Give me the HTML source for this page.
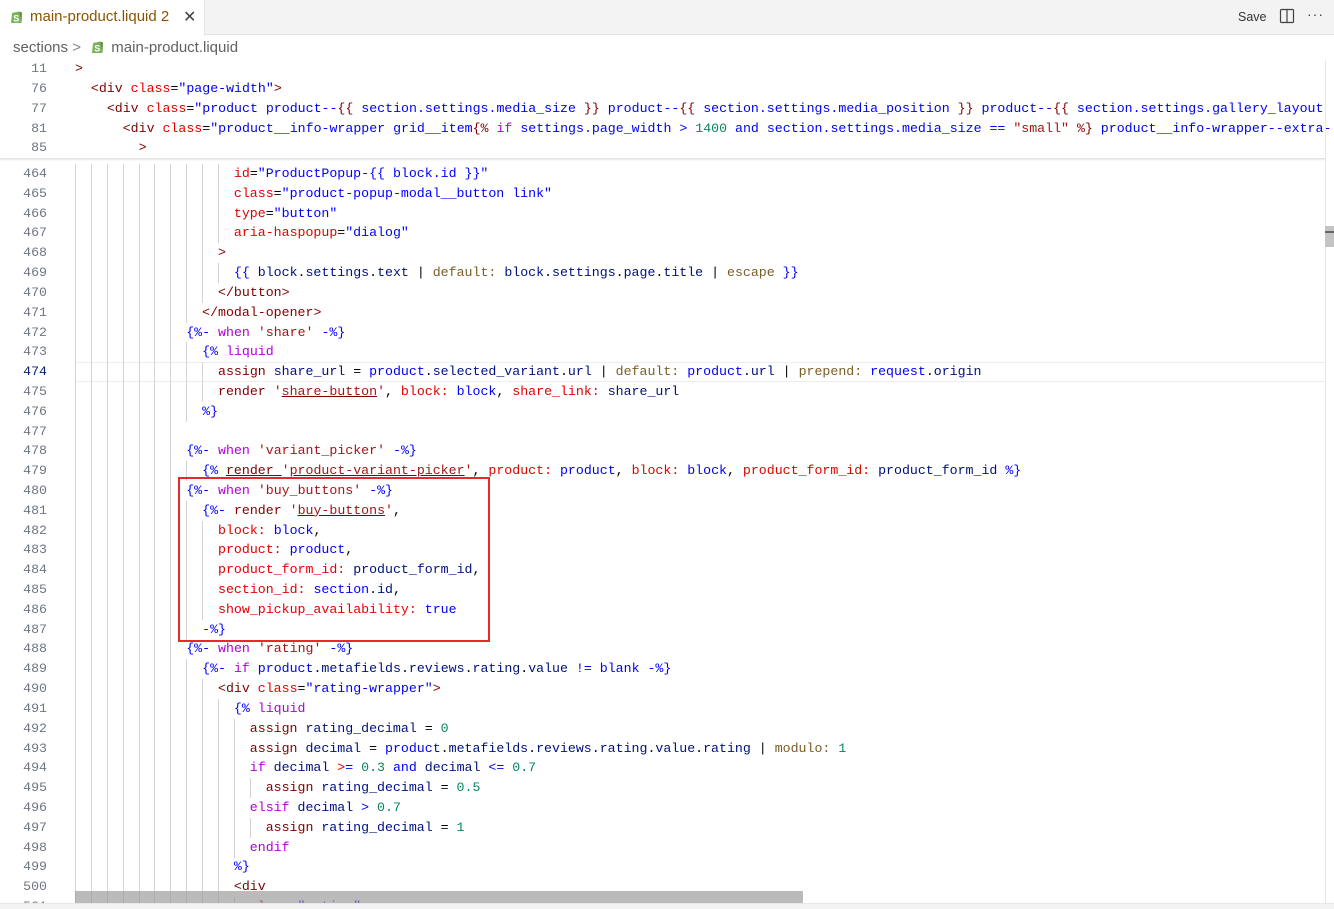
<!DOCTYPE html>
<html><head><meta charset="utf-8"><style>
*{margin:0;padding:0;box-sizing:border-box}
html,body{width:1334px;height:909px;overflow:hidden}
body{background:#fff;position:relative;font-family:"Liberation Sans",sans-serif}
.tabbar{position:absolute;left:0;top:0;width:1334px;height:35px;background:#f3f3f3;border-bottom:1px solid #e5e5e5}
.tab{position:absolute;left:0;top:0;width:205px;height:36px;background:#fff;border-right:1px solid #e5e5e5}
.tab .t{position:absolute;left:30px;top:8px;font-size:15px;color:#895503}
.tab .x{position:absolute;left:183px;top:7px;font-size:16px;color:#424242}
.save{position:absolute;left:1238px;top:10px;font-size:12.5px;color:#333}
.bc{position:absolute;left:13px;top:39px;font-size:15px;color:#616161}
.code{font-family:"Liberation Mono",monospace;font-size:13.25px;white-space:pre}
.ln{position:absolute;left:0;width:47px;text-align:right;color:#6e7681;font-family:"Liberation Mono",monospace;font-size:13.25px;line-height:20px}
.l{position:absolute;left:75px;line-height:20px;height:20px}
.g{display:inline-block;width:2ch;height:20px;vertical-align:top;box-shadow:inset 1px 0 #d3d3d3}
.tg{color:#800000}.at{color:#e50000}.s{color:#0000ff}.st{color:#a31515}.d{color:#0000ff}.k{color:#af00db}.v{color:#001080}.f{color:#795e26}.n{color:#098658}.u{text-decoration:underline;text-decoration-color:#800000}
#clip{position:absolute;left:0;top:0;width:1334px;height:903px;overflow:hidden}
</style></head><body>
<div class="tabbar"></div>
<div class="tab">
<svg style="position:absolute;left:10px;top:9px" width="13" height="15" viewBox="0 0 13 15"><path d="M2 4 L9 2.5 L11.5 14 L1 14 Z" fill="#7ab55c"/><path d="M9 2.5 L12 3.5 L11.5 14 Z" fill="#5e8e3e"/><text x="3.2" y="12.5" font-size="9" font-weight="bold" fill="#fff" font-family="Liberation Sans">S</text></svg>
<span class="t">main-product.liquid&nbsp;2</span><span class="x">✕</span></div>
<div class="save">Save</div>
<svg style="position:absolute;left:1279px;top:8px" width="16" height="16" viewBox="0 0 16 16"><rect x="1.5" y="1.5" width="13" height="13" rx="1" fill="none" stroke="#424242" stroke-width="1.2"/><line x1="8" y1="1.5" x2="8" y2="14.5" stroke="#424242" stroke-width="1.2"/></svg>
<div style="position:absolute;left:1307px;top:6px;font-size:14px;color:#424242;letter-spacing:1px">···</div>
<div class="bc">sections <span style="color:#888">&gt;</span> <svg style="vertical-align:-2px;margin:0 3px 0 6px" width="13" height="15" viewBox="0 0 13 15"><path d="M2 4 L9 2.5 L11.5 14 L1 14 Z" fill="#7ab55c"/><path d="M9 2.5 L12 3.5 L11.5 14 Z" fill="#5e8e3e"/><text x="3.2" y="12.5" font-size="9" font-weight="bold" fill="#fff" font-family="Liberation Sans">S</text></svg> main-product.liquid</div>

<div id="clip">
<div class="ln" style="top:59px">11</div><div class="l code" style="top:59px"><span class="tg">&gt;</span></div>
<div class="ln" style="top:79px">76</div><div class="l code" style="top:79px">  <span class="tg">&lt;div</span> <span class="at">class</span>=<span class="s">"page-width"</span><span class="tg">&gt;</span></div>
<div class="ln" style="top:99px">77</div><div class="l code" style="top:99px">    <span class="tg">&lt;div</span> <span class="at">class</span>=<span class="s">"product product--</span><span class="tg">{{</span><span class="s"> section.settings.media_size </span><span class="tg">}}</span><span class="s"> product--</span><span class="tg">{{</span><span class="s"> section.settings.media_position </span><span class="tg">}}</span><span class="s"> product--</span><span class="tg">{{</span><span class="s"> section.settings.gallery_layout</span></div>
<div class="ln" style="top:119px">81</div><div class="l code" style="top:119px">      <span class="tg">&lt;div</span> <span class="at">class</span>=<span class="s">"product__info-wrapper grid__item</span><span class="tg">{%</span> <span class="k">if</span> <span class="s">settings.page_width &gt; </span><span class="n">1400</span><span class="s"> and section.settings.media_size == </span><span class="st">"small"</span> <span class="tg">%}</span><span class="s"> product__info-wrapper--extra-</span></div>
<div class="ln" style="top:138px">85</div><div class="l code" style="top:138px">        <span class="tg">&gt;</span></div>
<div style="position:absolute;left:0;top:158px;width:1325px;height:3px;background:linear-gradient(#ddd,rgba(255,255,255,0))"></div>

<div style="position:absolute;left:75px;top:362px;width:1250px;height:20px;border-top:1px solid #eee;border-bottom:1px solid #eee"></div>

<div id="c"></div>
</div>
<script>
const G=n=>'<span class="g"></span>'.repeat(n/2);
const L=[
[464,20,'<span class="at">id</span>=<span class="s">"ProductPopup-{{ block.id }}"</span>'],
[465,20,'<span class="at">class</span>=<span class="s">"product-popup-modal__button link"</span>'],
[466,20,'<span class="at">type</span>=<span class="s">"button"</span>'],
[467,20,'<span class="at">aria-haspopup</span>=<span class="s">"dialog"</span>'],
[468,18,'<span class="tg">&gt;</span>'],
[469,20,'<span class="d">{{</span> <span class="v">block</span>.<span class="v">settings</span>.<span class="v">text</span> | <span class="f">default:</span> <span class="v">block</span>.<span class="v">settings</span>.<span class="v">page</span>.<span class="v">title</span> | <span class="f">escape</span> <span class="d">}}</span>'],
[470,18,'<span class="tg">&lt;/button&gt;</span>'],
[471,16,'<span class="tg">&lt;/modal-opener&gt;</span>'],
[472,14,'<span class="d">{%-</span> <span class="k">when</span> <span class="st">\'share\'</span> <span class="d">-%}</span>'],
[473,16,'<span class="d">{%</span> <span class="k">liquid</span>'],
[474,18,'<span class="tg">assign</span> <span class="v">share_url</span> = <span class="s">product</span>.<span class="v">selected_variant</span>.<span class="v">url</span> | <span class="f">default:</span> <span class="s">product</span>.<span class="v">url</span> | <span class="f">prepend:</span> <span class="s">request</span>.<span class="v">origin</span>'],
[475,18,'<span class="tg">render</span> <span class="st">\'<span class="u">share-button</span>\'</span>, <span class="at">block:</span> <span class="s">block</span>, <span class="at">share_link:</span> <span class="v">share_url</span>'],
[476,16,'<span class="d">%}</span>'],
[477,14,''],
[478,14,'<span class="d">{%-</span> <span class="k">when</span> <span class="st">\'variant_picker\'</span> <span class="d">-%}</span>'],
[479,16,'<span class="d">{%</span> <span class="tg u">render</span><span class="u"> </span><span class="st">\'<span class="u">product-variant-picker</span>\'</span>, <span class="at">product:</span> <span class="s">product</span>, <span class="at">block:</span> <span class="s">block</span>, <span class="at">product_form_id:</span> <span class="v">product_form_id</span> <span class="d">%}</span>'],
[480,14,'<span class="d">{%-</span> <span class="k">when</span> <span class="st">\'buy_buttons\'</span> <span class="d">-%}</span>'],
[481,16,'<span class="d">{%-</span> <span class="tg">render</span> <span class="st">\'<span class="u">buy-buttons</span>\'</span>,'],
[482,18,'<span class="at">block:</span> <span class="s">block</span>,'],
[483,18,'<span class="at">product:</span> <span class="s">product</span>,'],
[484,18,'<span class="at">product_form_id:</span> <span class="v">product_form_id</span>,'],
[485,18,'<span class="at">section_id:</span> <span class="s">section</span>.<span class="v">id</span>,'],
[486,18,'<span class="at">show_pickup_availability:</span> <span class="s">true</span>'],
[487,16,'<span class="d">-%}</span>'],
[488,14,'<span class="d">{%-</span> <span class="k">when</span> <span class="st">\'rating\'</span> <span class="d">-%}</span>'],
[489,16,'<span class="d">{%-</span> <span class="k">if</span> <span class="s">product</span>.<span class="v">metafields</span>.<span class="v">reviews</span>.<span class="v">rating</span>.<span class="v">value</span> <span class="s">!=</span> <span class="s">blank</span> <span class="d">-%}</span>'],
[490,18,'<span class="tg">&lt;div</span> <span class="at">class</span>=<span class="s">"rating-wrapper"</span><span class="tg">&gt;</span>'],
[491,20,'<span class="d">{%</span> <span class="k">liquid</span>'],
[492,22,'<span class="tg">assign</span> <span class="v">rating_decimal</span> = <span class="n">0</span>'],
[493,22,'<span class="tg">assign</span> <span class="v">decimal</span> = <span class="s">product</span>.<span class="v">metafields</span>.<span class="v">reviews</span>.<span class="v">rating</span>.<span class="v">value</span>.<span class="v">rating</span> | <span class="f">modulo:</span> <span class="n">1</span>'],
[494,22,'<span class="k">if</span> <span class="v">decimal</span> <span class="at">&gt;</span><span class="s">=</span> <span class="n">0.3</span> <span class="s">and</span> <span class="v">decimal</span> <span class="s">&lt;=</span> <span class="n">0.7</span>'],
[495,24,'<span class="tg">assign</span> <span class="v">rating_decimal</span> = <span class="n">0.5</span>'],
[496,22,'<span class="k">elsif</span> <span class="v">decimal</span> <span class="s">&gt;</span> <span class="n">0.7</span>'],
[497,24,'<span class="tg">assign</span> <span class="v">rating_decimal</span> = <span class="n">1</span>'],
[498,22,'<span class="k">endif</span>'],
[499,20,'<span class="d">%}</span>'],
[500,20,'<span class="tg">&lt;div</span>'],
[501,22,'<span class="at">class</span>=<span class="s">"rating"</span>']
];
let h='';
L.forEach((r,i)=>{const t=(164+i*19.81).toFixed(1);
h+=`<div class="ln" style="top:${t}px;${r[0]==474?'color:#0b216f':''}">${r[0]}</div><div class="l code" style="top:${t}px">${G(r[1])}${r[2]}</div>`;});
document.getElementById('c').innerHTML=h;
</script>

<div style="position:absolute;left:178px;top:477px;width:312px;height:165px;border:2px solid #e8282b"></div>

<div style="position:absolute;left:75px;top:891px;width:728px;height:12px;background:rgba(150,150,150,.65)"></div>
<div style="position:absolute;left:0;top:903px;width:1334px;height:6px;background:#f3f3f3;border-top:1px solid #e8e8e8"></div>
<div style="position:absolute;left:1325px;top:60px;width:1px;height:843px;background:#e8e8e8"></div>
<div style="position:absolute;left:1325px;top:226px;width:9px;height:21px;background:#c4c4c4"></div>
<div style="position:absolute;left:1325px;top:231px;width:9px;height:2px;background:#666"></div>
</body></html>
